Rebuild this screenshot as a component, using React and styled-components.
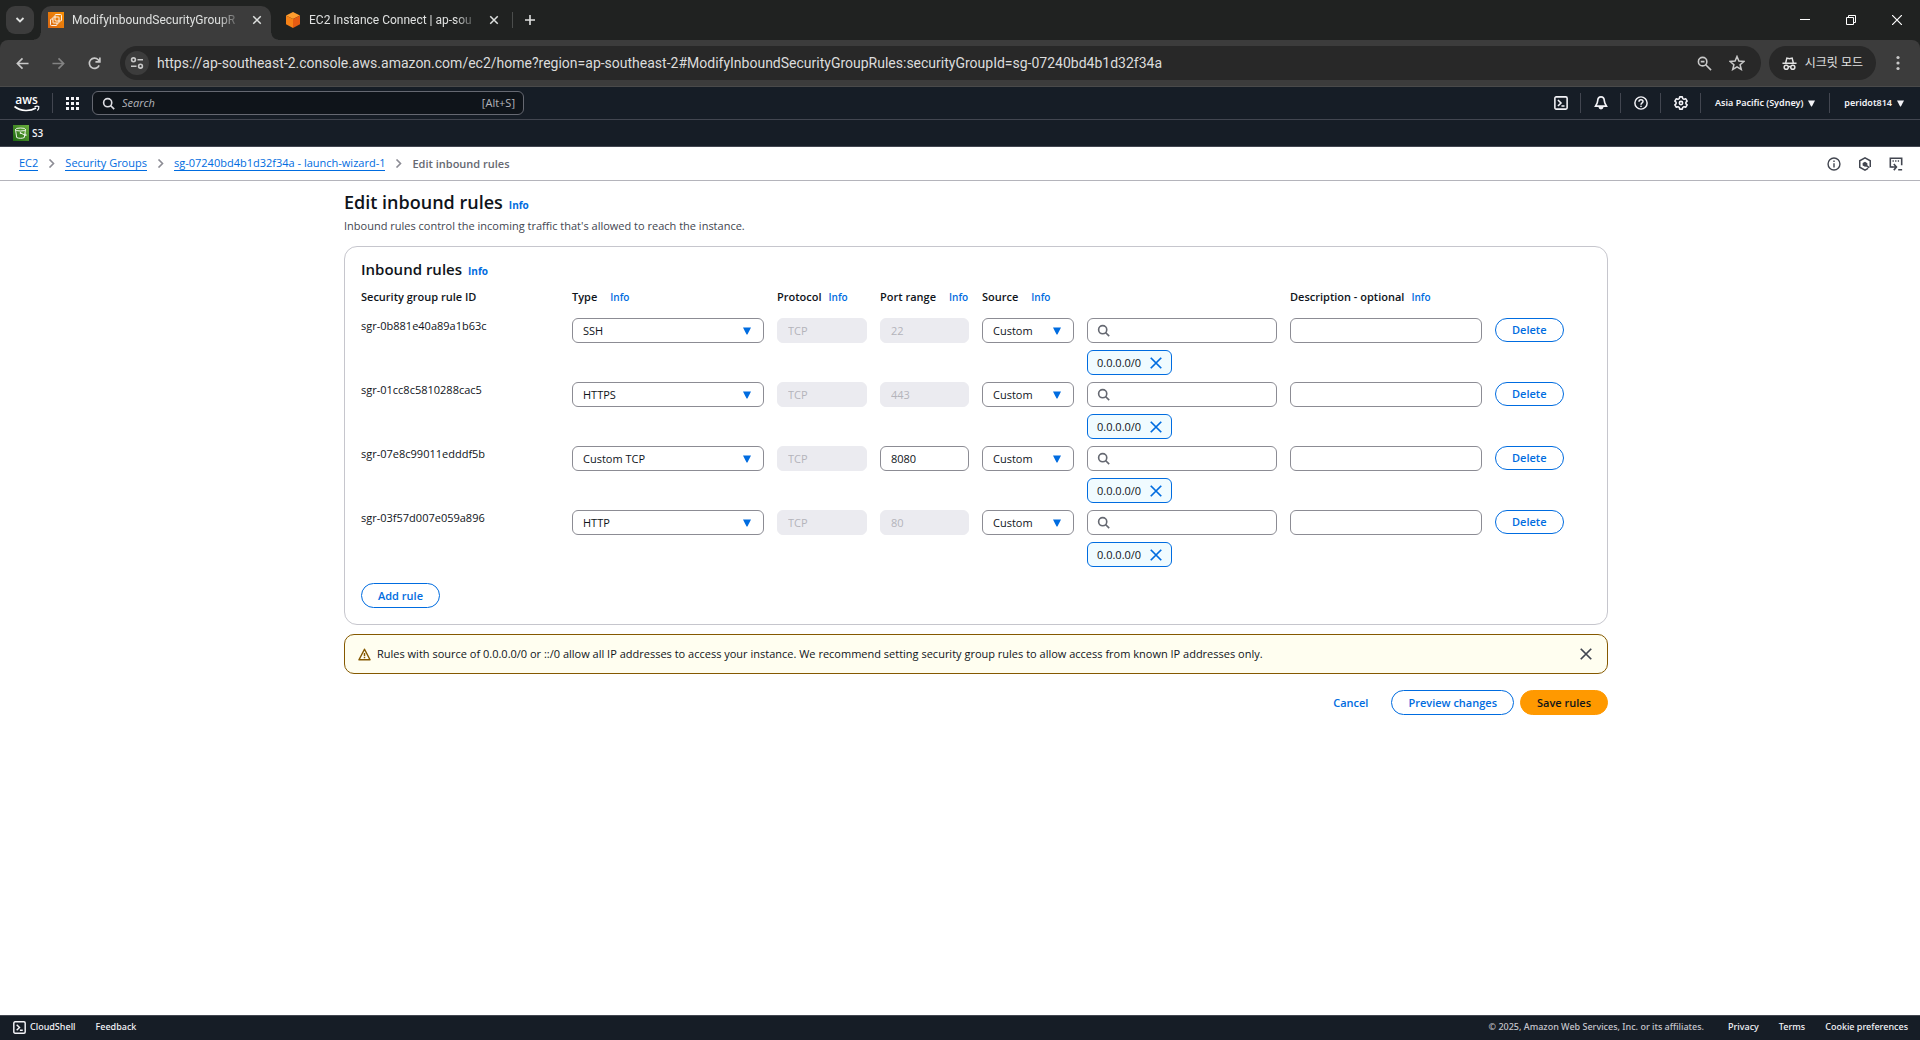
import React, { useState } from "react";
import styled, { createGlobalStyle } from "styled-components";

const GlobalStyle = createGlobalStyle`
  * {
    box-sizing: border-box;
  }

  body {
    margin: 0;
    background: #ffffff;
    color: #0f141a;
    font-family: "Open Sans", "Noto Sans CJK KR", sans-serif;
    font-size: 11px;
    line-height: 16px;
  }

  button, input, select {
    font: inherit;
    color: inherit;
    margin: 0;
  }

  button {
    cursor: pointer;
  }

  svg {
    display: block;
    flex: none;
  }
`;

const Page = styled.div`
  display: flex;
  flex-direction: column;
  min-height: 100vh;
`;

/* browser window */

const TabStrip = styled.div`
  display: flex;
  align-items: flex-end;
  height: 40px;
  padding-left: 6px;
  background: #202221;
  color: #dfe1e0;
  font-family: Roboto, "Noto Sans CJK KR", sans-serif;
  font-size: 12px;
`;

const PlainButton = styled.button`
  display: flex;
  align-items: center;
  justify-content: center;
  flex: none;
  width: ${(props) => props.$width || 24}px;
  height: ${(props) => props.$height || 24}px;
  padding: 0;
  border: 0;
  background: none;
`;

const TabSearch = styled(PlainButton)`
  margin-bottom: 6px;
  border-radius: 9px;
  background: #3c3c3c;
`;

const TabFoot = styled.span`
  flex: none;
  width: 7px;
  height: 7px;
  background: radial-gradient(circle at ${(props) => props.$side} top, transparent 6px, #3c3c3c 7px);
`;

const Tab = styled.div`
  display: flex;
  align-items: center;
  gap: 8px;
  flex: 0 1 230px;
  min-width: 0;
  height: 34px;
  padding: 0 7px 6px;
  border-radius: 10px 10px 0 0;
  background: ${(props) => (props.$active ? "#3c3c3c" : "transparent")};
`;

const TabTitle = styled.span`
  flex: 1;
  overflow: hidden;
  line-height: 20px;
  white-space: nowrap;
  mask-image: linear-gradient(90deg, #000 calc(100% - 24px), transparent);
`;

const TabDivider = styled.span`
  width: 1px;
  height: 16px;
  margin: 0 5px 12px 4px;
  background: #4b4d4c;
`;

const WindowButtons = styled.div`
  display: flex;
  margin-left: auto;
  color: #ffffff;
`;

const Toolbar = styled.div`
  background: #202221;
`;

const ToolbarInner = styled.div`
  display: flex;
  align-items: center;
  gap: 8px;
  height: 47px;
  padding: 0 8px;
  border-bottom: 1px solid #4a4a4a;
  border-radius: 8px 8px 0 0;
  background: #3c3c3c;
  color: #c9c9c9;
`;

const AddressBar = styled.div`
  display: flex;
  align-items: center;
  gap: 8px;
  flex: 1;
  height: 34px;
  margin-left: 4px;
  padding: 0 12px 0 5px;
  border-radius: 17px;
  background: #282828;
`;

const SiteInfo = styled(PlainButton)`
  border-radius: 50%;
  background: #3c3c3c;
`;

const AddressInput = styled.input`
  flex: 1;
  min-width: 0;
  padding: 0;
  border: 0;
  outline: 0;
  background: none;
  color: #dcdcdc;
  font-family: Roboto, "Noto Sans CJK KR", sans-serif;
  font-size: 14px;
`;

const IncognitoPill = styled.button`
  display: flex;
  align-items: center;
  gap: 8px;
  height: 34px;
  padding: 0 13px;
  border: 0;
  border-radius: 17px;
  background: #282828;
  color: #e3e3e3;
  font-size: 12px;
`;

/* console navigation */

const ConsoleNav = styled.header`
  background: #161d26;
  color: #f3f3f7;
  font-weight: 600;
`;

const NavRow = styled.div`
  display: flex;
  align-items: center;
  height: 33px;
  padding: 0 16px 0 14px;
  border-bottom: 1px solid #424650;
`;

const NavDivider = styled.span`
  width: 1px;
  height: 20px;
  background: #424650;
`;

const LogoLink = styled.a`
  margin-right: 12px;
  color: #ffffff;
`;

const NavSearch = styled.label`
  display: flex;
  align-items: center;
  gap: 7px;
  flex: 0 1 432px;
  height: 24px;
  padding: 0 8px 0 9px;
  border: 1px solid #656871;
  border-radius: 6px;
  background: #0f141a;
  color: #b4b4bb;
  font-weight: 400;

  svg {
    color: #dedee3;
  }

  input {
    flex: 1;
    min-width: 0;
    padding: 0;
    border: 0;
    outline: 0;
    background: none;
  }

  input::placeholder {
    color: #b4b4bb;
    font-style: italic;
  }
`;

const NavTools = styled.div`
  display: flex;
  align-items: center;
  margin-left: auto;
`;

const NavMenu = styled.button`
  display: flex;
  align-items: center;
  gap: 5px;
  padding: ${(props) => (props.$last ? "0 0 0 14px" : "0 14px")};
  border: 0;
  background: none;
  font-family: "Noto Sans", sans-serif;
  font-size: 9px;
  white-space: nowrap;
`;

const FavoritesRow = styled.div`
  display: flex;
  align-items: center;
  height: 27px;
  padding: 0 13px;
  border-bottom: 1px solid #424650;

  a {
    display: flex;
    align-items: center;
    gap: 3px;
    color: inherit;
    font-size: 10px;
    line-height: 14px;
    text-decoration: none;
  }
`;

const BreadcrumbBar = styled.div`
  display: flex;
  align-items: center;
  justify-content: space-between;
  height: 34px;
  padding: 0 12px 0 19px;
  border-bottom: 1px solid #b4b4bb;
  color: #424650;
`;

const Breadcrumbs = styled.nav`
  display: flex;
  align-items: center;
  gap: 9px;
  color: #8c8c94;

  a {
    color: #006ce0;
    line-height: 14px;
    text-decoration: none;
    border-bottom: 1px solid #006ce0;
  }

  span {
    color: #656871;
    font-weight: 600;
  }
`;

const BarIcons = styled.div`
  display: flex;
  gap: 7px;
`;

/* page content */

const Main = styled.main`
  flex: 1;
  padding: 9px 0 24px 32px;
`;

const Content = styled.div`
  max-width: 1264px;
  margin: 0 auto;
`;

const Info = styled.a`
  color: #006ce0;
  font-size: 10px;
  font-weight: ${(props) => (props.$strong ? 700 : 600)};
  text-decoration: none;
`;

const PageTitle = styled.h1`
  display: flex;
  align-items: baseline;
  gap: 6px;
  height: 24px;
  margin: 0 0 4px;
  font-size: 18px;
  line-height: 24px;
  font-weight: 600;
`;

const Description = styled.p`
  margin: 0 0 12px;
  color: #424650;
`;

const Card = styled.section`
  padding: 12px 16px 16px;
  border: 1px solid #c6c6cd;
  border-radius: 13px;
`;

const CardTitle = styled.h2`
  display: flex;
  align-items: baseline;
  gap: 6px;
  height: 20px;
  margin: 0 0 10px;
  font-size: 15px;
  line-height: 20px;
  font-weight: 600;
`;

const RulesTable = styled.table`
  width: 100%;
  margin-bottom: 9px;
  border-collapse: collapse;
  table-layout: fixed;

  th {
    padding: 0 0 13px;
    font-weight: 600;
    text-align: left;
    white-space: nowrap;
  }

  td {
    height: 64px;
    padding: 0 13px 0 0;
    vertical-align: top;
  }

  td:last-child {
    padding: 0;
  }
`;

const Column = styled.col`
  width: ${(props) => props.$width}px;
`;

const HeaderLabel = styled.div`
  display: flex;
  gap: ${(props) => (props.$wide ? 13 : 7)}px;
`;

const TextField = styled.input`
  display: block;
  width: 100%;
  height: 25px;
  padding: 0 10px;
  border: 1px solid #8c8c94;
  border-radius: 6px;
  background: #ffffff;

  &:disabled {
    border-color: #ebebf0;
    background: #ebebf0;
    color: #b4b4bb;
  }
`;

const SelectBox = styled.div`
  display: grid;
  align-items: center;

  select, svg {
    grid-area: 1 / 1;
  }

  select {
    width: 100%;
    height: 25px;
    padding: 0 24px 0 10px;
    border: 1px solid #8c8c94;
    border-radius: 6px;
    background: #ffffff;
    appearance: none;
  }

  svg {
    justify-self: end;
    margin-right: 13px;
    color: #006ce0;
    pointer-events: none;
  }
`;

const SearchField = styled.label`
  display: flex;
  align-items: center;
  gap: 6px;
  height: 25px;
  padding: 0 9px;
  border: 1px solid #8c8c94;
  border-radius: 6px;
  color: #656871;

  input {
    flex: 1;
    min-width: 0;
    padding: 0;
    border: 0;
    outline: 0;
    background: none;
  }
`;

const Token = styled.span`
  display: inline-flex;
  align-items: center;
  gap: 8px;
  height: 25px;
  margin-top: 7px;
  padding: 0 8px 0 9px;
  border: 1px solid #006ce0;
  border-radius: 6px;
  background: #f0fbff;

  button {
    color: #006ce0;
  }
`;

const Button = styled.button`
  height: ${(props) => (props.$compact ? 24 : 25)}px;
  padding: 0 16px;
  border: 1px solid ${(props) => (props.$primary ? "#ff9900" : props.$link ? "transparent" : "#006ce0")};
  border-radius: 13px;
  background: ${(props) => (props.$primary ? "#ff9900" : "#ffffff")};
  color: ${(props) => (props.$primary ? "#0f141a" : "#006ce0")};
  font-weight: 600;
  line-height: 16px;
  white-space: nowrap;
`;

const Alert = styled.div`
  display: flex;
  align-items: center;
  gap: 6px;
  min-height: 40px;
  margin: 9px 0 16px;
  padding: 0 13px;
  border: 1px solid #855900;
  border-radius: 10px;
  background: #fffef0;
  color: #855900;

  p {
    flex: 1;
    margin: 0;
    color: #0f141a;
  }

  button {
    color: #424650;
  }
`;

const Actions = styled.div`
  display: flex;
  justify-content: flex-end;
  gap: 6px;
`;

const Footer = styled.footer`
  display: flex;
  align-items: center;
  gap: 20px;
  height: 25px;
  padding: 0 12px 2px 13px;
  border-top: 1px solid #424650;
  background: #161d26;
  color: #f3f3f7;
  font-family: "Noto Sans", sans-serif;
  font-size: 9px;
  font-weight: 500;

  a {
    display: flex;
    align-items: center;
    gap: 4px;
    color: inherit;
    text-decoration: none;
  }

  span {
    margin: 0 4px 0 auto;
    color: #c6c6cd;
  }
`;

/* icons */

const Icon = ({ size = 16, width = 2, box = 16, children }) => (
  <svg
    width={size}
    height={size}
    viewBox={`0 0 ${box} ${box}`}
    fill="none"
    stroke="currentColor"
    strokeWidth={width}
    aria-hidden="true"
  >
    {children}
  </svg>
);

const CloseIcon = ({ size = 14, width = 2 }) => (
  <Icon size={size} width={width}><path d="M2 2l12 12M14 2L2 14" /></Icon>
);

const SearchIcon = ({ size = 13 }) => (
  <Icon size={size}><circle cx="7" cy="7" r="5" /><path d="M10.5 10.5L15 15" /></Icon>
);

const CaretIcon = ({ size = 8 }) => (
  <svg width={size} height={size} viewBox="0 0 9 9" fill="currentColor" aria-hidden="true">
    <path d="M0 .5h9L5 8.500H4z" />
  </svg>
);

const ChevronIcon = () => (
  <Icon size={9} box={9} width={1.6}><path d="M2.500 0.500L6.500 4.500 2.500 8.500" /></Icon>
);

const ShellIcon = ({ size = 14 }) => (
  <Icon size={size} width={1.8}>
    <rect x="1" y="1" width="14" height="14" rx="1.500" />
    <path d="M4.500 4.500L8 8l-3.500 3.500M8.500 11.500H12" />
  </Icon>
);

const AwsLogo = () => (
  <svg width="26" height="22" viewBox="0 0 26 22" aria-hidden="true">
    <text x="12.500" y="12" fill="#ffffff" fontFamily="Open Sans" fontSize="12" fontWeight="600" textAnchor="middle">aws</text>
    <path d="M0.500 14.500c6.500 5 15.500 5 21.500 1.500" fill="none" stroke="#ffffff" strokeWidth="1.600" />
    <path d="M20.500 14.700c1.500-.6 3.200-.7 4.300-.2.300 1.300-.3 2.900-1.500 4" fill="none" stroke="#ffffff" strokeWidth="1.200" />
  </svg>
);

const Ec2FavIcon = () => (
  <svg width="16" height="16" viewBox="0 0 16 16" fill="none" stroke="#ffffff" strokeWidth="0.900" aria-hidden="true">
    <defs>
      <linearGradient id="ec2" x1="0" y1="1" x2="1" y2="0">
        <stop offset="0" stopColor="#d86613" />
        <stop offset="1" stopColor="#f78e04" />
      </linearGradient>
    </defs>
    <rect width="16" height="16" fill="url(#ec2)" stroke="none" />
    <path d="M5 7H3.500a1 1 0 0 0-1 1v4.500a1 1 0 0 0 1 1H8a1 1 0 0 0 1-1V11" />
    <rect x="7" y="2.500" width="6.500" height="6.500" rx="1" />
    <rect x="5" y="5" width="6" height="6" rx="0.500" />
  </svg>
);

const CubeIcon = () => (
  <svg width="16" height="16" viewBox="0 0 16 16" aria-hidden="true">
    <path d="M8 0l7 3.500L8 7 1 3.500z" fill="#ff9d2e" />
    <path d="M1 3.500L8 7v9l-7-3.700z" fill="#f58217" />
    <path d="M15 3.500L8 7v9l7-3.700z" fill="#e55b12" />
  </svg>
);

const S3Icon = () => (
  <svg width="16" height="16" viewBox="0 0 16 16" fill="none" stroke="#ffffff" strokeWidth="0.900" aria-hidden="true">
    <defs>
      <linearGradient id="s3" x1="0" y1="1" x2="1" y2="0">
        <stop offset="0" stopColor="#1b660f" />
        <stop offset="1" stopColor="#6cae3e" />
      </linearGradient>
    </defs>
    <rect width="16" height="16" fill="url(#s3)" stroke="none" />
    <ellipse cx="7.500" cy="4.500" rx="5" ry="1.500" />
    <path d="M2.500 4.500l1.200 8c1.800 1.100 5.800 1.100 7.600 0l1.200-8M7.500 8l5.500 2.500c.8-.2.300-1-1-1.700" />
    <circle cx="7.500" cy="8" r="0.500" />
  </svg>
);

const BellIcon = () => (
  <Icon size={14} width={1.9}>
    <path d="M8 1C5.500 1 4.300 3 4.200 5.500 4.100 8 3 9.500 1.800 11.500h12.400C13 9.500 11.900 8 11.800 5.500 11.700 3 10.500 1 8 1z" />
    <path d="M6 12.500c.3 2.500 3.700 2.500 4 0" fill="currentColor" />
  </Icon>
);

const HelpIcon = () => (
  <Icon size={14} width={1.7}>
    <circle cx="8" cy="8" r="7" />
    <path d="M5.700 6.500c0-3 4.600-3 4.600-.2C10.300 8 8 7.800 8 10" />
    <path d="M8 11v1.700" />
  </Icon>
);

const GearIcon = () => (
  <Icon size={14} width={1.8}>
    <path
      d="M6.500 1h3l.5 2 1.500.8 2-.6L15 5.800 13.600 7.200v1.600L15 10.200l-1.500 2.600-2-.6-1.500.8-.5 2h-3L6 13l-1.500-.8-2 .6L1 10.200l1.400-1.400V7.200L1 5.800l1.500-2.600 2 .6L6 3z"
      strokeLinejoin="round"
    />
    <circle cx="8" cy="8" r="1.900" />
  </Icon>
);

const InfoIcon = () => (
  <Icon size={14} width={1.6}><circle cx="8" cy="8" r="6.800" /><path d="M8 7v5M8 4v1.700" /></Icon>
);

const HexIcon = () => (
  <Icon size={14} width={1.7}>
    <path d="M11.500 13L8 15 2 11.700V4.300L8 1l6 3.300v7" />
    <path d="M8 5.300L10.700 7v2.500l2.800 2.300-1.200 1-3-2L8 11 5.300 9.700V6.800z" fill="currentColor" stroke="none" />
  </Icon>
);

const WindowShellIcon = () => (
  <Icon size={14} width={1.8}>
    <path d="M4 11.500H1.500V1.500h13v8" />
    <path d="M4 4.500h1.500M7 4.500h1.500M10 4.500h1.500" />
    <path d="M3 11.500h5M5.500 8l3 3.500-3 3.500M10.500 14.500H15" />
  </Icon>
);

const WarningIcon = () => (
  <Icon size={13} width={1.8}>
    <path d="M8 1.500L1.200 14.500h13.600z" strokeLinejoin="round" />
    <path d="M8 6v4M8 11v1.700" />
  </Icon>
);

const IncognitoIcon = () => (
  <Icon size={15} width={1.6}>
    <path d="M4 7L5.200 2.200 8 3l2.800-.8L12 7M.5 7.700h15" />
    <circle cx="4.500" cy="12" r="2.200" />
    <circle cx="11.500" cy="12" r="2.200" />
    <path d="M6.700 11.700c.8-.5 1.800-.5 2.600 0" />
  </Icon>
);

const rules = [
  { id: "sgr-0b881e40a89a1b63c", type: "SSH", port: "22" },
  { id: "sgr-01cc8c5810288cac5", type: "HTTPS", port: "443" },
  { id: "sgr-07e8c99011edddf5b", type: "Custom TCP", port: "8080", editable: true },
  { id: "sgr-03f57d007e059a896", type: "HTTP", port: "80" },
];

const ruleTypes = ["Custom TCP", "SSH", "HTTP", "HTTPS"];
const columns = [211, 205, 103, 102, 105, 203, 205, 96];

const Select = ({ label, value, options }) => (
  <SelectBox>
    <select aria-label={label} defaultValue={value}>
      {options.map((option) => <option key={option}>{option}</option>)}
    </select>
    <CaretIcon />
  </SelectBox>
);

const RuleRow = ({ rule }) => (
  <tr>
    <td>{rule.id}</td>
    <td><Select label="Type" value={rule.type} options={ruleTypes} /></td>
    <td><TextField aria-label="Protocol" defaultValue="TCP" disabled /></td>
    <td><TextField aria-label="Port range" defaultValue={rule.port} disabled={!rule.editable} /></td>
    <td><Select label="Source type" value="Custom" options={["Custom", "Anywhere-IPv4", "My IP"]} /></td>
    <td>
      <SearchField>
        <SearchIcon />
        <input type="text" aria-label="Source" />
      </SearchField>
      <Token>
        0.0.0.0/0
        <PlainButton $width={14} $height={14} aria-label="Remove 0.0.0.0/0"><CloseIcon /></PlainButton>
      </Token>
    </td>
    <td><TextField aria-label="Description" /></td>
    <td><Button $compact>Delete</Button></td>
  </tr>
);

const BrowserWindow = () => (
  <div>
    <TabStrip>
      <TabSearch $width={28} $height={28} aria-label="Search tabs">
        <Icon size={10} box={10} width={1.8}><path d="M1.500 3L5 6.500 8.500 3" /></Icon>
      </TabSearch>
      <TabFoot $side="left" />
      <Tab $active>
        <Ec2FavIcon />
        <TabTitle>ModifyInboundSecurityGroupR</TabTitle>
        <PlainButton $width={14} $height={14} aria-label="Close tab"><CloseIcon size={10} width={2.4} /></PlainButton>
      </Tab>
      <TabFoot $side="right" />
      <Tab>
        <CubeIcon />
        <TabTitle>EC2 Instance Connect | ap-sou</TabTitle>
        <PlainButton $width={14} $height={14} aria-label="Close tab"><CloseIcon size={10} width={2.4} /></PlainButton>
      </Tab>
      <TabDivider />
      <PlainButton $height={40} aria-label="New tab">
        <Icon size={12} box={12} width={1.6}><path d="M6 1v10M1 6h10" /></Icon>
      </PlainButton>
      <WindowButtons>
        <PlainButton $width={46} $height={40} aria-label="Minimize">
          <Icon size={10} box={10} width={1}><path d="M0 4.500h10" /></Icon>
        </PlainButton>
        <PlainButton $width={46} $height={40} aria-label="Restore">
          <Icon size={10} box={10} width={1}><path d="M0.500 2.500h7v7h-7zM2.500 2.500v-2h7v7h-2" /></Icon>
        </PlainButton>
        <PlainButton $width={46} $height={40} aria-label="Close window">
          <Icon size={10} box={10} width={1.2}><path d="M0 0l10 10M10 0L0 10" /></Icon>
        </PlainButton>
      </WindowButtons>
    </TabStrip>
    <Toolbar>
      <ToolbarInner>
        <PlainButton $width={28} aria-label="Back">
          <Icon size={13} box={14} width={1.8}><path d="M13.500 7H2M7 1.500L1.500 7 7 12.500" /></Icon>
        </PlainButton>
        <PlainButton $width={28} aria-label="Forward" disabled>
          <Icon size={13} box={14} width={1.8}><path d="M0.500 7H12M7 1.500L12.500 7 7 12.500" opacity="0.500" /></Icon>
        </PlainButton>
        <PlainButton $width={28} aria-label="Reload">
          <Icon size={13} box={14} width={1.8}><path d="M12 9A5.500 5.500 0 1 1 11 3L12.500 5M12.800 0.500V5.200H8" /></Icon>
        </PlainButton>
        <AddressBar>
          <SiteInfo aria-label="Site information">
            <Icon size={14} box={14} width={1.6}>
              <circle cx="3.500" cy="3.800" r="1.900" />
              <path d="M7.500 3.800H13M1 10.200h5.500" />
              <circle cx="10.500" cy="10.200" r="1.900" />
            </Icon>
          </SiteInfo>
          <AddressInput
            aria-label="Address"
            defaultValue="https://ap-southeast-2.console.aws.amazon.com/ec2/home?region=ap-southeast-2#ModifyInboundSecurityGroupRules:securityGroupId=sg-07240bd4b1d32f34a"
          />
          <PlainButton aria-label="Zoom">
            <Icon size={15} width={1.7}><circle cx="6" cy="6" r="4.500" /><path d="M9.300 9.300L15 15M4 6h4" /></Icon>
          </PlainButton>
          <PlainButton aria-label="Bookmark this page">
            <Icon width={1.5}>
              <path d="M8 1.500l1.900 4.600 5 .4-3.800 3.200 1.200 4.800L8 11.900l-4.300 2.600 1.200-4.800L1.100 6.500l5-.4z" />
            </Icon>
          </PlainButton>
        </AddressBar>
        <IncognitoPill>
          <IncognitoIcon />
          시크릿 모드
        </IncognitoPill>
        <PlainButton $width={28} aria-label="Browser menu">
          <svg width="4" height="16" viewBox="0 0 4 16" fill="currentColor">
            <circle cx="2" cy="2.500" r="1.600" /><circle cx="2" cy="8" r="1.600" /><circle cx="2" cy="13.500" r="1.600" />
          </svg>
        </PlainButton>
      </ToolbarInner>
    </Toolbar>
  </div>
);

const Navigation = () => (
  <ConsoleNav>
    <NavRow>
      <LogoLink href="#home" aria-label="AWS home"><AwsLogo /></LogoLink>
      <NavDivider />
      <PlainButton $width={39} aria-label="Services">
        <svg width="13" height="13" viewBox="0 0 13 13" fill="currentColor">
          {[0, 5, 10].map((y) => [0, 5, 10].map((x) => <rect key={`${x}-${y}`} x={x} y={y} width="3" height="3" />))}
        </svg>
      </PlainButton>
      <NavSearch>
        <SearchIcon />
        <input type="text" placeholder="Search" aria-label="Search" />
        [Alt+S]
      </NavSearch>
      <NavTools>
        <PlainButton $width={39} aria-label="CloudShell"><ShellIcon /></PlainButton>
        <NavDivider />
        <PlainButton $width={39} aria-label="Notifications"><BellIcon /></PlainButton>
        <NavDivider />
        <PlainButton $width={39} aria-label="Support"><HelpIcon /></PlainButton>
        <NavDivider />
        <PlainButton $width={39} aria-label="Settings"><GearIcon /></PlainButton>
        <NavDivider />
        <NavMenu>Asia Pacific (Sydney)<CaretIcon size={7} /></NavMenu>
        <NavDivider />
        <NavMenu $last>peridot814<CaretIcon size={7} /></NavMenu>
      </NavTools>
    </NavRow>
    <FavoritesRow><a href="#s3"><S3Icon />S3</a></FavoritesRow>
  </ConsoleNav>
);

const App = () => {
  const [alertOpen, setAlertOpen] = useState(true);

  return (
    <Page>
      <GlobalStyle />
      <BrowserWindow />
      <Navigation />
      <BreadcrumbBar>
        <Breadcrumbs>
          <a href="#ec2">EC2</a>
          <ChevronIcon />
          <a href="#groups">Security Groups</a>
          <ChevronIcon />
          <a href="#group">sg-07240bd4b1d32f34a - launch-wizard-1</a>
          <ChevronIcon />
          <span>Edit inbound rules</span>
        </Breadcrumbs>
        <BarIcons>
          <PlainButton aria-label="Help panel"><InfoIcon /></PlainButton>
          <PlainButton aria-label="Amazon Q"><HexIcon /></PlainButton>
          <PlainButton aria-label="Open shell"><WindowShellIcon /></PlainButton>
        </BarIcons>
      </BreadcrumbBar>
      <Main>
        <Content>
          <PageTitle>Edit inbound rules <Info $strong href="#info">Info</Info></PageTitle>
          <Description>Inbound rules control the incoming traffic that's allowed to reach the instance.</Description>
          <Card>
            <CardTitle>Inbound rules <Info $strong href="#info">Info</Info></CardTitle>
            <RulesTable>
              <colgroup>
                {columns.map((width, i) => <Column key={i} $width={width} />)}
              </colgroup>
              <thead>
                <tr>
                  <th>Security group rule ID</th>
                  <th><HeaderLabel $wide>Type <Info href="#info">Info</Info></HeaderLabel></th>
                  <th><HeaderLabel>Protocol <Info href="#info">Info</Info></HeaderLabel></th>
                  <th><HeaderLabel $wide>Port range <Info href="#info">Info</Info></HeaderLabel></th>
                  <th><HeaderLabel $wide>Source <Info href="#info">Info</Info></HeaderLabel></th>
                  <th></th>
                  <th><HeaderLabel>Description - optional <Info href="#info">Info</Info></HeaderLabel></th>
                  <th></th>
                </tr>
              </thead>
              <tbody>
                {rules.map((rule) => <RuleRow key={rule.id} rule={rule} />)}
              </tbody>
            </RulesTable>
            <Button>Add rule</Button>
          </Card>
          {alertOpen && (
            <Alert>
              <WarningIcon />
              <p>
                Rules with source of 0.0.0.0/0 or ::/0 allow all IP addresses to access your instance. We recommend
                setting security group rules to allow access from known IP addresses only.
              </p>
              <PlainButton $width={16} $height={16} aria-label="Dismiss" onClick={() => setAlertOpen(false)}>
                <CloseIcon />
              </PlainButton>
            </Alert>
          )}
          <Actions>
            <Button $link>Cancel</Button>
            <Button>Preview changes</Button>
            <Button $primary>Save rules</Button>
          </Actions>
        </Content>
      </Main>
      <Footer>
        <a href="#shell"><ShellIcon size={13} />CloudShell</a>
        <a href="#feedback">Feedback</a>
        <span>© 2025, Amazon Web Services, Inc. or its affiliates.</span>
        <a href="#privacy">Privacy</a>
        <a href="#terms">Terms</a>
        <a href="#cookies">Cookie preferences</a>
      </Footer>
    </Page>
  );
};

export default App;
